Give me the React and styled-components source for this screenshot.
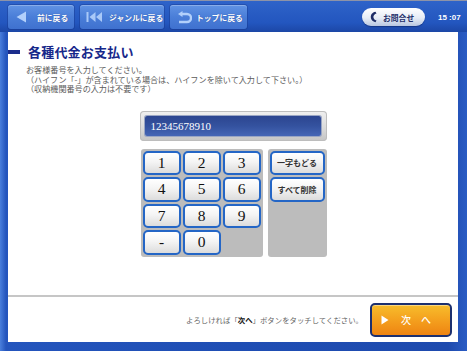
import React from "react";
import styled, { createGlobalStyle } from "styled-components";

const Global = createGlobalStyle`
  html, body { margin: 0; padding: 0; background: #2152b8; }
  body { font-family: "Noto Sans CJK JP", "Noto Sans", sans-serif; }
  * { box-sizing: border-box; }
`;

const Screen = styled.div`
  width: 467px;
  height: 351px;
  display: flex;
  flex-direction: column;
  background: linear-gradient(90deg, #4a7fdc 0px, #2455bd 6px, #1f4eb4 50%, #1e4aae 96%, #2a5cc4 100%);
  overflow: hidden;
`;

const Header = styled.div`
  height: 32px;
  flex: none;
  display: flex;
  align-items: center;
  padding: 1px 9px 0 8px;
  gap: 6px;
  border-top: 1px solid #8d93a8;
  background: linear-gradient(180deg, #2e63c9 0%, #2356bf 70%, #1c47a6 100%);
`;

const NavButton = styled.div`
  height: 24px;
  width: ${(p) => p.$w}px;
  display: flex;
  align-items: center;
  gap: ${(p) => p.$gap}px;
  padding-left: ${(p) => p.$pl}px;
  border-radius: 3px;
  background: linear-gradient(180deg, #6193e4 0%, #4a7ed8 50%, #3f71cf 100%);
  box-shadow: inset 0 1px 0 rgba(255, 255, 255, 0.25), 0 0 0 1px rgba(20, 50, 130, 0.35);
  color: #fff;
  font-size: 7.8px;
  font-weight: 700;
  white-space: nowrap;
  text-shadow: 0 0 1px rgba(20, 40, 110, 0.6);
`;

const Spacer = styled.div`
  flex: 1;
`;

const Inquiry = styled.div`
  width: 63px;
  height: 18px;
  display: flex;
  align-items: center;
  gap: 6px;
  padding-left: 8px;
  border-radius: 9px;
  background: linear-gradient(180deg, #ffffff 0%, #e6ecf6 55%, #b9c7e0 100%);
  box-shadow: 0 1px 1px rgba(10, 30, 90, 0.5);
  color: #1f2f6a;
  font-size: 7.8px;
  font-weight: 700;
  margin-right: 7px;
`;

const Clock = styled.div`
  color: #fff;
  font-family: "Liberation Sans", Arial, sans-serif;
  font-weight: 700;
  font-size: 8px;
  width: 20px;
  white-space: pre;
`;

const Panel = styled.div`
  flex: 1;
  margin: 0 9px 9px 8px;
  background: #fff;
  display: flex;
  flex-direction: column;
`;

const Body = styled.div`
  flex: 1;
  display: flex;
  flex-direction: column;
`;

const TitleRow = styled.div`
  display: flex;
  align-items: center;
  height: 16px;
  margin-top: 12px;
`;

const TitleMarker = styled.div`
  width: 12px;
  height: 4px;
  background: #1b2d8c;
  margin-right: 8px;
`;

const Title = styled.h1`
  margin: 0;
  font-size: 13px;
  font-weight: 700;
  letter-spacing: 0.2px;
  color: #17288a;
  line-height: 16px;
`;

const Desc = styled.div`
  margin: 5px 0 0 18px;
  font-size: 8.1px;
  line-height: 9.5px;
  color: #5a5a5a;
  white-space: nowrap;
`;

const Center = styled.div`
  align-self: center;
  margin-top: 17px;
  width: 187px;
  display: flex;
  flex-direction: column;
  gap: 8px;
`;

const DisplayFrame = styled.div`
  height: 30px;
  padding: 5px 6px 5px 5px;
  border-radius: 4px;
  background: linear-gradient(180deg, #f0f0f0 0%, #d9d9d9 60%, #c4c4c4 100%);
  box-shadow: inset 0 0 0 1px #bdbdbd;
`;

const Display = styled.div`
  height: 100%;
  border-radius: 2px;
  background: linear-gradient(180deg, #2c4590 0%, #34529f 50%, #4566b6 100%);
  box-shadow: 0 0 0 1px #9aa6c4;
  color: #fff;
  font-family: "Liberation Serif", "Times New Roman", serif;
  font-size: 11px;
  display: flex;
  align-items: center;
  padding-left: 6px;
`;

const Pads = styled.div`
  display: flex;
  gap: 5px;
  padding-left: 1px;
`;

const PadBox = styled.div`
  display: grid;
  grid-template-columns: ${(p) => p.$cols};
  grid-template-rows: repeat(4, 24.5px);
  column-gap: 2px;
  row-gap: 2px;
  padding: 2px;
  background: #bcbcbc;
  border-radius: 3px;
`;

const Key = styled.div`
  border: 2px solid #2466c6;
  border-radius: 5px;
  background: linear-gradient(180deg, #ffffff 0%, #f4f4f4 45%, #dcdcdc 100%);
  display: flex;
  align-items: center;
  justify-content: center;
  color: ${(p) => (p.$small ? "#333" : "#111")};
  font-family: ${(p) =>
    p.$small
      ? '"Noto Sans CJK JP", sans-serif'
      : '"Liberation Serif", "Times New Roman", serif'};
  font-size: ${(p) => (p.$small ? "8px" : "15.5px")};
  font-weight: ${(p) => (p.$small ? 700 : 400)};
  white-space: nowrap;
`;

const Separator = styled.div`
  height: 2px;
  background: #c6c6c6;
  flex: none;
`;

const Footer = styled.div`
  height: 45px;
  flex: none;
  display: flex;
  align-items: center;
  justify-content: flex-end;
  padding-right: 6px;
  gap: 7px;
`;

const Hint = styled.div`
  font-size: 7.4px;
  color: #666;
  white-space: nowrap;
  b {
    color: #111;
    font-weight: 700;
  }
`;

const NextButton = styled.div`
  width: 82px;
  height: 34px;
  border: 2px solid #1c3070;
  border-radius: 5px;
  background: linear-gradient(180deg, #f7bd2c 0%, #f4a01e 50%, #ee8412 100%);
  box-shadow: inset 0 1px 0 rgba(255, 255, 255, 0.4);
  display: flex;
  align-items: center;
  padding-left: 9px;
  color: #fff;
  font-size: 10px;
  font-weight: 500;
`;

const NextLabel = styled.span`
  margin-left: 12px;
  letter-spacing: 10px;
`;

const BackIcon = () => (
  <svg width="11" height="12" viewBox="0 0 11 12">
    <path d="M10 0.5 L0.5 6 L10 11.5 Z" fill="#b2d0fb" />
  </svg>
);

const SkipIcon = () => (
  <svg width="17" height="12" viewBox="0 0 17 12">
    <rect x="0.5" y="1" width="2" height="10" fill="#a9c9f8" />
    <path d="M9.5 1 L3.5 6 L9.5 11 Z" fill="#a9c9f8" />
    <path d="M16 1 L10 6 L16 11 Z" fill="#a9c9f8" />
  </svg>
);

const TopIcon = () => (
  <svg width="15" height="13" viewBox="0 0 15 13">
    <path
      d="M4 3 H10 A4 4 0 0 1 10 11 H2"
      fill="none"
      stroke="#b2d0fb"
      strokeWidth="2.4"
    />
    <path d="M5.5 0 L1 3 L5.5 6 Z" fill="#b2d0fb" />
  </svg>
);

const PhoneIcon = () => (
  <svg width="7" height="12" viewBox="0 0 7 12">
    <path
      d="M5.5 0.8 C2 1.5 0.8 4 0.8 6 C0.8 8 2 10.5 5.5 11.2 L6.5 9.5 C4.5 9 3.4 7.5 3.4 6 C3.4 4.5 4.5 3 6.5 2.5 Z"
      fill="#1d2c66"
    />
  </svg>
);

const PlayIcon = () => (
  <svg width="8" height="10" viewBox="0 0 8 10">
    <path d="M0.5 0.5 L7.5 5 L0.5 9.5 Z" fill="#fff" />
  </svg>
);

const numKeys = ["1", "2", "3", "4", "5", "6", "7", "8", "9", "-", "0"];

export default function App() {
  return (
    <>
      <Global />
      <Screen>
        <Header>
          <NavButton $w={66} $pl={8} $gap={10}>
            <BackIcon />
            前に戻る
          </NavButton>
          <NavButton $w={84} $pl={6} $gap={6}>
            <SkipIcon />
            ジャンルに戻る
          </NavButton>
          <NavButton $w={77} $pl={7} $gap={4}>
            <TopIcon />
            トップに戻る
          </NavButton>
          <Spacer />
          <Inquiry>
            <PhoneIcon />
            お問合せ
          </Inquiry>
          <Clock>{"15 :07"}</Clock>
        </Header>
        <Panel>
          <Body>
            <TitleRow>
              <TitleMarker />
              <Title>各種代金お支払い</Title>
            </TitleRow>
            <Desc>
              お客様番号を入力してください。
              <br />
              （ハイフン「-」が含まれている場合は、ハイフンを除いて入力して下さい。）
              <br />
              （収納機関番号の入力は不要です）
            </Desc>
            <Center>
              <DisplayFrame>
                <Display>12345678910</Display>
              </DisplayFrame>
              <Pads>
                <PadBox $cols="repeat(3, 38px)">
                  {numKeys.map((k) => (
                    <Key key={k}>{k}</Key>
                  ))}
                </PadBox>
                <PadBox $cols="55px">
                  <Key $small>一字もどる</Key>
                  <Key $small>すべて削除</Key>
                </PadBox>
              </Pads>
            </Center>
          </Body>
          <Separator />
          <Footer>
            <Hint>
              よろしければ「<b>次へ</b>」ボタンをタッチしてください。
            </Hint>
            <NextButton>
              <PlayIcon />
              <NextLabel>次へ</NextLabel>
            </NextButton>
          </Footer>
        </Panel>
      </Screen>
    </>
  );
}
